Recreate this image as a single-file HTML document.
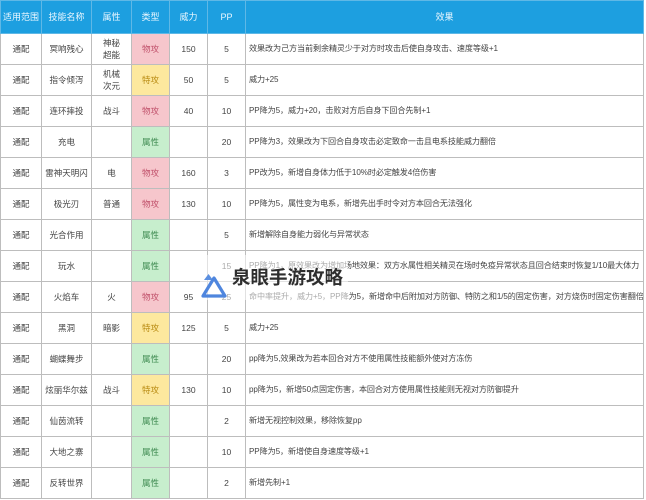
<!DOCTYPE html>
<html><head><meta charset="utf-8"><style>
body{margin:0;width:646px;height:500px;background:#fff;overflow:hidden;position:relative;font-family:"Liberation Sans","Noto Sans CJK SC",sans-serif;}
table{position:absolute;left:0;top:0;border-collapse:collapse;table-layout:fixed;width:644px;}
td,th{border:1px solid #bdbdbd;font-size:8.5px;color:#444;text-align:center;padding:0;height:30px;line-height:12px;font-weight:normal;white-space:nowrap;overflow:hidden}
th{background:#1d9fe0;color:#eaf7ff;height:32px;border-color:#5fb8e6;font-size:9px}
td.e{text-align:left;padding-left:3px;font-size:8.1px;letter-spacing:-0.1px}
.r{background:#f6c6cc;color:#c0506a}.y{background:#fde89e;color:#b88a10}.g{background:#c7eecd;color:#3e8a50}
.wm{position:absolute;left:200px;top:255px;width:148px;height:45px;background:rgba(255,255,255,0.55)}
.t{position:absolute;left:232px;top:265px;font-size:18.5px;font-weight:bold;color:#2e2e2e;font-family:"Noto Sans CJK SC",sans-serif;line-height:24px}
</style></head><body>
<table>
<colgroup><col style="width:41px"><col style="width:50px"><col style="width:40px"><col style="width:38px"><col style="width:38px"><col style="width:38px"><col></colgroup>
<tr><th>适用范围</th><th>技能名称</th><th>属性</th><th>类型</th><th>威力</th><th>PP</th><th>效果</th></tr>
<tr><td>通配</td><td>冥响残心</td><td>神秘<br>超能</td><td class="r">物攻</td><td>150</td><td>5</td><td class="e">效果改为己方当前剩余精灵少于对方时攻击后使自身攻击、速度等级+1</td></tr>
<tr><td>通配</td><td>指令倾泻</td><td>机械<br>次元</td><td class="y">特攻</td><td>50</td><td>5</td><td class="e">威力+25</td></tr>
<tr><td>通配</td><td>连环摔投</td><td>战斗</td><td class="r">物攻</td><td>40</td><td>10</td><td class="e">PP降为5，威力+20，击败对方后自身下回合先制+1</td></tr>
<tr><td>通配</td><td>充电</td><td></td><td class="g">属性</td><td></td><td>20</td><td class="e">PP降为3，效果改为下回合自身攻击必定致命一击且电系技能威力翻倍</td></tr>
<tr><td>通配</td><td>雷神天明闪</td><td>电</td><td class="r">物攻</td><td>160</td><td>3</td><td class="e">PP改为5，新增自身体力低于10%时必定触发4倍伤害</td></tr>
<tr><td>通配</td><td>极光刃</td><td>普通</td><td class="r">物攻</td><td>130</td><td>10</td><td class="e">PP降为5，属性变为电系，新增先出手时令对方本回合无法强化</td></tr>
<tr><td>通配</td><td>光合作用</td><td></td><td class="g">属性</td><td></td><td>5</td><td class="e">新增解除自身能力弱化与异常状态</td></tr>
<tr><td>通配</td><td>玩水</td><td></td><td class="g">属性</td><td></td><td>15</td><td class="e">PP降为1，原效果改为增加场地效果：双方水属性相关精灵在场时免疫异常状态且回合结束时恢复1/10最大体力</td></tr>
<tr><td>通配</td><td>火焰车</td><td>火</td><td class="r">物攻</td><td>95</td><td>25</td><td class="e">命中率提升，威力+5，PP降为5，新增命中后附加对方防御、特防之和1/5的固定伤害，对方烧伤时固定伤害翻倍</td></tr>
<tr><td>通配</td><td>黑洞</td><td>暗影</td><td class="y">特攻</td><td>125</td><td>5</td><td class="e">威力+25</td></tr>
<tr><td>通配</td><td>蝴蝶舞步</td><td></td><td class="g">属性</td><td></td><td>20</td><td class="e">pp降为5,效果改为若本回合对方不使用属性技能额外使对方冻伤</td></tr>
<tr><td>通配</td><td>炫丽华尔兹</td><td>战斗</td><td class="y">特攻</td><td>130</td><td>10</td><td class="e">pp降为5，新增50点固定伤害，本回合对方使用属性技能则无视对方防御提升</td></tr>
<tr><td>通配</td><td>仙茵流转</td><td></td><td class="g">属性</td><td></td><td>2</td><td class="e">新增无视控制效果，移除恢复pp</td></tr>
<tr><td>通配</td><td>大地之寨</td><td></td><td class="g">属性</td><td></td><td>10</td><td class="e">PP降为5，新增使自身速度等级+1</td></tr>
<tr><td>通配</td><td>反转世界</td><td></td><td class="g">属性</td><td></td><td>2</td><td class="e">新增先制+1</td></tr>
</table>
<div class="wm"></div>
<svg style="position:absolute;left:201px;top:272px" width="26" height="26" viewBox="0 0 26 26">
<path d="M3 8 L12 8 L7.5 2 Z" fill="#5b8fe0"/>
<path d="M13 6 L24 24 L2 24 Z" fill="none" stroke="#4f86de" stroke-width="3.2" stroke-linejoin="round"/>
</svg>
<div class="t">泉眼手游攻略</div>
</body></html>
